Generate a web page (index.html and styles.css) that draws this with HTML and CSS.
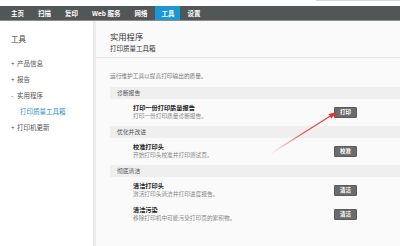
FILE: index.html
```html
<!DOCTYPE html>
<html lang="zh-CN">
<head>
  <meta charset="UTF-8" />
  <title>工具</title>
  <link rel="stylesheet" href="styles.css">
</head>
<body>

  <div class="top-strip"><div class="search-edge"></div></div>

  <nav class="menu">
    <a href="#">主页</a>
    <a href="#">扫描</a>
    <a href="#">复印</a>
    <a href="#">Web 服务</a>
    <a href="#">网络</a>
    <a href="#" class="active">工具</a>
    <a href="#">设置</a>
  </nav>

  <div class="layout">
    <aside class="sidebar">
      <div class="side-title">工具</div>
      <ul class="side-list">
        <li><span class="sign">+</span>产品信息</li>
        <li><span class="sign">+</span>报告</li>
        <li><span class="sign">-</span>实用程序</li>
        <li class="sub">打印质量工具箱</li>
        <li><span class="sign">+</span>打印机更新</li>
      </ul>
    </aside>

    <main class="content">
      <div class="page-head">
        <h1>实用程序</h1>
        <h2>打印质量工具箱</h2>
      </div>

      <p class="intro">运行维护工具以提高打印输出的质量。</p>

      <div class="group">
        <div class="group-title">诊断报告</div>
        <div class="item">
          <div>
            <div class="item-name">打印一份打印质量报告</div>
            <div class="item-desc">打印一份打印质量诊断报告。</div>
          </div>
          <button>打印</button>
        </div>
      </div>

      <div class="group">
        <div class="group-title">优化并改进</div>
        <div class="item">
          <div>
            <div class="item-name">校准打印头</div>
            <div class="item-desc">开始打印头校准并打印测试页。</div>
          </div>
          <button>校准</button>
        </div>
      </div>

      <div class="group">
        <div class="group-title">彻底清洁</div>
        <div class="item">
          <div>
            <div class="item-name">清洁打印头</div>
            <div class="item-desc">激活打印头清洁并打印进度报告。</div>
          </div>
          <button>清洁</button>
        </div>
        <div class="item">
          <div>
            <div class="item-name">清洁污染</div>
            <div class="item-desc">移除打印机中可能污染打印页的累积物。</div>
          </div>
          <button>清洁</button>
        </div>
      </div>
    </main>
  </div>

  <!-- red pointer drawn over the page -->
  <svg class="pointer" width="400" height="246" viewBox="0 0 400 246">
    <defs>
      <linearGradient id="fade" x1="270" y1="154" x2="336" y2="112" gradientUnits="userSpaceOnUse">
        <stop offset="0" stop-color="#e8322b" stop-opacity="0"/>
        <stop offset="0.5" stop-color="#e8322b" stop-opacity="0.8"/>
        <stop offset="1" stop-color="#e8322b"/>
      </linearGradient>
    </defs>
    <line x1="270" y1="154" x2="332" y2="115" stroke="url(#fade)" stroke-width="1.3"/>
    <polygon points="337,112 328.5,114 331.5,118.5" fill="#e8322b"/>
  </svg>

</body>
</html>
```

FILE: styles.css
```css
body {
  margin: 0;
  font-family: "Noto Sans CJK SC", "Noto Sans", sans-serif;
  background: #fafafa;
  color: #333;
  width: 400px;
  height: 246px;
  overflow: hidden;
  position: relative;
}

.top-strip {
  height: 6px;
  background: #fff;
  position: relative;
}

.search-edge {
  position: absolute;
  right: 0;
  top: 0;
  width: 84px;
  height: 1px;
  background: #d4d4d4;
}

.menu {
  display: flex;
  height: 14px;
  background: #515656;
  border-bottom: 1px solid #8a8e8e;
  padding-left: 4px;
}

.menu a {
  color: #fff;
  text-decoration: none;
  font-size: 6.5px;
  font-weight: bold;
  line-height: 14px;
  padding: 0 7px;
}

.menu a.active {
  background: #1b97d5;
  padding: 0 6px;
  margin-left: 1px;
}

.layout {
  display: flex;
  height: 225px;
}

.sidebar {
  width: 93px;
  background: #fff;
  border-right: 3px solid #ececec;
  flex-shrink: 0;
}

.side-title {
  font-size: 7.5px;
  color: #444;
  padding: 13px 0 0 11px;
  line-height: 10px;
}

.side-list {
  list-style: none;
  margin: 14px 0 0;
  padding: 0 0 0 11px;
}

.side-list li {
  font-size: 6.5px;
  color: #555;
  line-height: 10px;
  margin-bottom: 6px;
}

.side-list .sign {
  display: inline-block;
  width: 6px;
}

.side-list .sub {
  color: #2d8fd0;
  padding-left: 9px;
}

.content {
  flex: 1;
  padding-left: 14px;
}

.page-head {
  border-bottom: 1px solid #e6e6e6;
  margin-left: -14px;
  padding: 10px 0 4px 14px;
}

.page-head h1 {
  margin: 0;
  font-size: 8.3px;
  font-weight: normal;
  color: #333;
  line-height: 11px;
}

.page-head h2 {
  margin: 2px 0 0;
  font-size: 6.5px;
  font-weight: normal;
  color: #333;
  line-height: 9px;
}

.intro {
  margin: 13px 0 7px;
  font-size: 5.7px;
  color: #777;
  line-height: 9px;
}

.group-title {
  background: #efefef;
  font-size: 5.8px;
  color: #555;
  line-height: 12px;
  padding-left: 7px;
}

.item {
  display: flex;
  justify-content: space-between;
  align-items: center;
  padding: 5px 43px 6px 23px;
}

.item + .item {
  padding-top: 2px;
}

.item-name {
  font-size: 6.2px;
  font-weight: bold;
  color: #222;
  line-height: 8px;
}

.item-desc {
  font-size: 5.7px;
  color: #888;
  line-height: 8px;
}

button {
  width: 23px;
  height: 11px;
  padding: 0;
  background: #6c6c6c;
  border: 1px solid #5a5a5a;
  border-radius: 1px;
  color: #fff;
  font-family: inherit;
  font-size: 5.5px;
  font-weight: bold;
  line-height: 9px;
}

.pointer {
  position: absolute;
  left: 0;
  top: 0;
  pointer-events: none;
}
```
